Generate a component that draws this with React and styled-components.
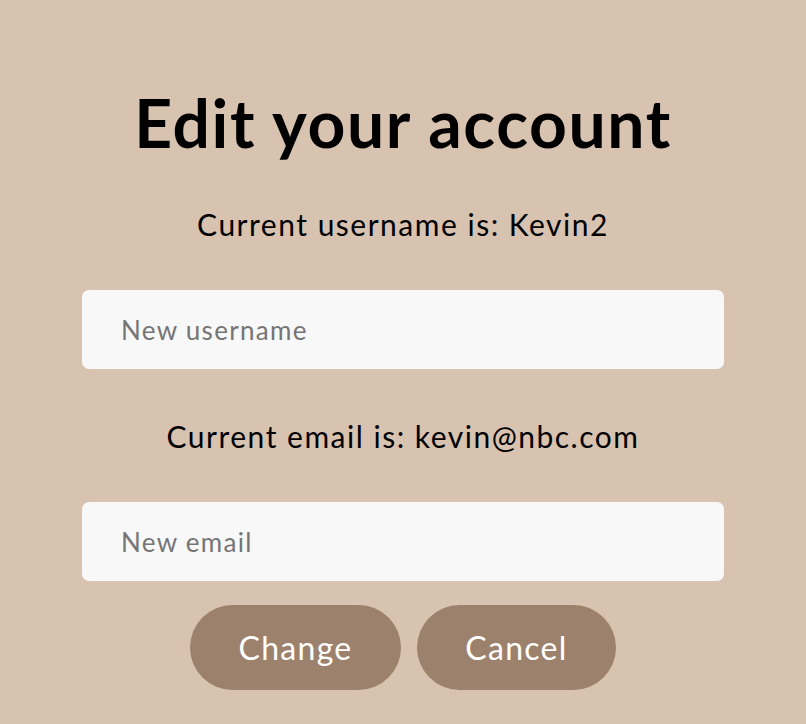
import React from "react";
import styled, { createGlobalStyle } from "styled-components";

const Global = createGlobalStyle`
  html, body { margin: 0; padding: 0; background: #d8c2b0; }
  body { font-family: Lato, "Open Sans", sans-serif; }
`;

const Page = styled.div`
  min-height: 724px;
  background: #d8c2b0;
  display: flex;
  flex-direction: column;
  align-items: center;
  padding-top: 83px;
  box-sizing: border-box;
`;

const Title = styled.h1`
  margin: 0;
  font-size: 66px;
  line-height: 80px;
  font-weight: 700;
  letter-spacing: 1.6px;
  color: #000;
`;

const Info = styled.p`
  margin: ${(p) => p.$top}px 0 0;
  font-size: 30px;
  line-height: 40px;
  letter-spacing: 1.5px;
  color: #000;
`;

const Input = styled.input`
  margin-top: ${(p) => p.$top}px;
  width: 642px;
  height: 79px;
  box-sizing: border-box;
  border: none;
  border-radius: 7px;
  background: #f8f8f8;
  padding: 0 39px;
  font-family: inherit;
  font-size: 26px;
  letter-spacing: 1.3px;
  color: #333;
  outline: none;
  &::placeholder { color: #757575; }
`;

const Buttons = styled.div`
  margin-top: 24px;
  display: flex;
  gap: 16px;
`;

const Button = styled.button`
  width: ${(p) => p.$w}px;
  height: 85px;
  border: none;
  border-radius: 43px;
  background: #9c826c;
  color: #fff;
  font-family: inherit;
  font-size: 32px;
  letter-spacing: 1.3px;
  cursor: pointer;
`;

export default function App() {
  return (
    <>
      <Global />
      <Page>
        <Title>Edit your account</Title>
        <Info $top={41}>Current username is: Kevin2</Info>
        <Input $top={46} placeholder="New username" />
        <Info $top={47}>Current email is: kevin@nbc.com</Info>
        <Input $top={46} placeholder="New email" />
        <Buttons>
          <Button $w={211}>Change</Button>
          <Button $w={199}>Cancel</Button>
        </Buttons>
      </Page>
    </>
  );
}
